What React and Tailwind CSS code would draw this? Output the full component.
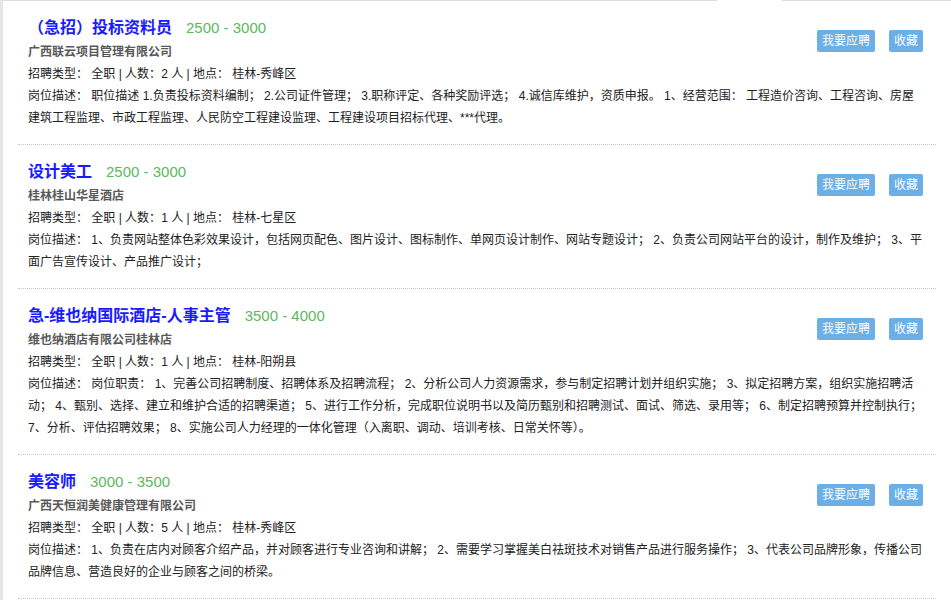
import React from 'react';

const jobs = [
  {
    id: 1,
    title: '（急招）投标资料员',
    salary: '2500 - 3000',
    company: '广西联云项目管理有限公司',
    count: 2,
    place: '桂林-秀峰区',
    desc: '职位描述 1.负责投标资料编制； 2.公司证件管理； 3.职称评定、各种奖励评选； 4.诚信库维护，资质申报。 1、经营范围： 工程造价咨询、工程咨询、房屋建筑工程监理、市政工程监理、人民防空工程建设监理、工程建设项目招标代理、***代理。'
  },
  {
    id: 2,
    title: '设计美工',
    salary: '2500 - 3000',
    company: '桂林桂山华星酒店',
    count: 1,
    place: '桂林-七星区',
    desc: '1、负责网站整体色彩效果设计，包括网页配色、图片设计、图标制作、单网页设计制作、网站专题设计； 2、负责公司网站平台的设计，制作及维护； 3、平面广告宣传设计、产品推广设计；'
  },
  {
    id: 3,
    title: '急-维也纳国际酒店-人事主管',
    salary: '3500 - 4000',
    company: '维也纳酒店有限公司桂林店',
    count: 1,
    place: '桂林-阳朔县',
    desc: '岗位职责： 1、完善公司招聘制度、招聘体系及招聘流程； 2、分析公司人力资源需求，参与制定招聘计划并组织实施； 3、拟定招聘方案，组织实施招聘活动； 4、甄别、选择、建立和维护合适的招聘渠道； 5、进行工作分析，完成职位说明书以及简历甄别和招聘测试、面试、筛选、录用等； 6、制定招聘预算并控制执行； 7、分析、评估招聘效果； 8、实施公司人力经理的一体化管理（入离职、调动、培训考核、日常关怀等）。'
  },
  {
    id: 4,
    title: '美容师',
    salary: '3000 - 3500',
    company: '广西天恒润美健康管理有限公司',
    count: 5,
    place: '桂林-秀峰区',
    desc: '1、负责在店内对顾客介绍产品，并对顾客进行专业咨询和讲解； 2、需要学习掌握美白祛斑技术对销售产品进行服务操作； 3、代表公司品牌形象，传播公司品牌信息、营造良好的企业与顾客之间的桥梁。'
  }
];

const JobItem = ({ job }) => (
  <div className="pl-[10px] pr-[13px] pt-[14px] pb-[15px] border-b border-dotted border-[#c8c8c8]">
    <div className="flex items-start justify-between">
      <div>
        <div className="flex items-center h-[26px] leading-[26px]">
          <span className="text-[16px] font-bold text-[#1a1aff]">{job.title}</span>
          <span className="ml-[14px] text-[15px] text-[#5cb85c]">{job.salary}</span>
        </div>
        <div className="text-[12px] leading-[22px] font-bold text-[#595959]">{job.company}</div>
        <div className="text-[12px] leading-[22px] text-[#222]">
          招聘类型： 全职 | 人数：{job.count} 人 | 地点： {job.place}
        </div>
      </div>
      <div className="flex gap-[14px] mt-[15px]">
        <button className="h-[22px] px-[5px] rounded-[2px] bg-[#6caee6] text-white text-[12px] leading-[22px]">
          我要应聘
        </button>
        <button className="h-[22px] px-[5px] rounded-[2px] bg-[#6caee6] text-white text-[12px] leading-[22px]">
          收藏
        </button>
      </div>
    </div>
    <p className="text-[12px] leading-[22px] text-[#222]">岗位描述： {job.desc}</p>
  </div>
);

export default function App() {
  return (
    <div
      className="flex min-h-[600px] bg-white"
      style={{ fontFamily: '"Liberation Sans", "Noto Sans CJK SC", sans-serif' }}
    >
      <div className="w-[3px] bg-[#e6e6e6]" />
      <div className="flex-1">
        <div className="flex h-px">
          <div className="flex-1 bg-[#dcdcdc]" />
          <div className="w-[65px] bg-white" />
          <div className="w-[169px] bg-[#dcdcdc]" />
        </div>
        <div className="ml-[15px] mr-[15px]">
          {jobs.map((job) => (
            <JobItem key={job.id} job={job} />
          ))}
        </div>
      </div>
    </div>
  );
}
